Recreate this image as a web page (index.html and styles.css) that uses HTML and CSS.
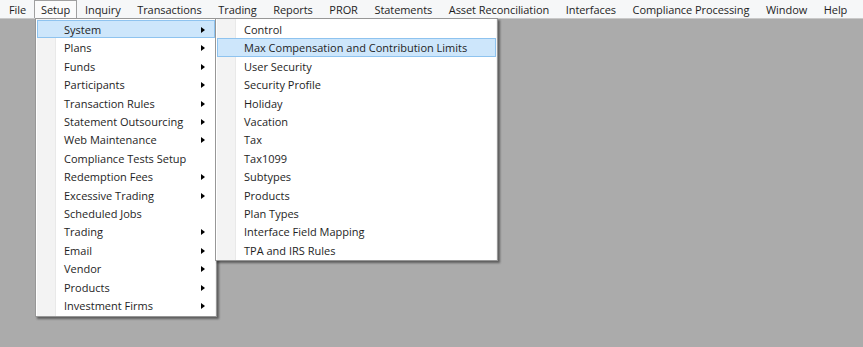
FILE: index.html
```html
<!DOCTYPE html>
<html lang="en">
<head>
  <meta charset="UTF-8">
  <title>Setup Menu</title>
  <link rel="stylesheet" href="styles.css">
</head>
<body>
  <div class="app">
    <div class="menubar">
      <div class="top-item">File</div>
      <div class="top-item open">Setup</div>
      <div class="top-item">Inquiry</div>
      <div class="top-item">Transactions</div>
      <div class="top-item">Trading</div>
      <div class="top-item">Reports</div>
      <div class="top-item">PROR</div>
      <div class="top-item">Statements</div>
      <div class="top-item">Asset Reconciliation</div>
      <div class="top-item">Interfaces</div>
      <div class="top-item">Compliance Processing</div>
      <div class="top-item">Window</div>
      <div class="top-item">Help</div>
    </div>

    <div class="workspace">
      <ul class="menu setup-menu">
        <li class="hover sub">System</li>
        <li class="sub">Plans</li>
        <li class="sub">Funds</li>
        <li class="sub">Participants</li>
        <li class="sub">Transaction Rules</li>
        <li class="sub">Statement Outsourcing</li>
        <li class="sub">Web Maintenance</li>
        <li>Compliance Tests Setup</li>
        <li class="sub">Redemption Fees</li>
        <li class="sub">Excessive Trading</li>
        <li>Scheduled Jobs</li>
        <li class="sub">Trading</li>
        <li class="sub">Email</li>
        <li class="sub">Vendor</li>
        <li class="sub">Products</li>
        <li class="sub">Investment Firms</li>
      </ul>

      <ul class="menu system-menu">
        <li>Control</li>
        <li class="hover">Max Compensation and Contribution Limits</li>
        <li>User Security</li>
        <li>Security Profile</li>
        <li>Holiday</li>
        <li>Vacation</li>
        <li>Tax</li>
        <li>Tax1099</li>
        <li>Subtypes</li>
        <li>Products</li>
        <li>Plan Types</li>
        <li>Interface Field Mapping</li>
        <li>TPA and IRS Rules</li>
      </ul>
    </div>
  </div>
</body>
</html>
```

FILE: styles.css
```css
body {
  margin: 0;
  font-family: "Open Sans", "Noto Sans", sans-serif;
  font-size: 11px;
  color: #1e1e1e;
  background-color: #ababab;
}
.app {
  width: 863px;
  height: 347px;
  overflow: hidden;
}
.menubar {
  display: flex;
  height: 19px;
  background-color: #f6f7f8;
  border-bottom: 1px solid #c9c9c9;
  box-sizing: border-box;
  letter-spacing: -0.07px;
}
.top-item {
  padding: 0 7.8px;
  line-height: 18px;
  white-space: nowrap;
  box-sizing: border-box;
  border: 1px solid transparent;
  margin-left: -1px;
}
.top-item:first-child {
  margin-left: 0;
  padding-left: 8px;
}
.top-item.open {
  background-color: #fbfbfb;
  border-color: #a0a0a0;
  border-bottom-color: transparent;
  padding: 0 6px;
  height: 19px;
}
.workspace {
  position: relative;
  height: 328px;
}
.menu {
  position: absolute;
  margin: 0;
  padding: 1px;
  list-style: none;
  border: 1px solid #979797;
  background: linear-gradient(to right, #f3f3f3 0, #f3f3f3 18px, #e9e9e9 18px, #e9e9e9 19px, #ffffff 19px);
  background-origin: content-box;
  background-clip: padding-box;
  box-shadow: 2px 2px 2px rgba(0, 0, 0, 0.45);
}
.setup-menu {
  left: 35px;
  top: -1px;
  width: 178px;
}
.system-menu {
  left: 215px;
  top: -1px;
  width: 279px;
  z-index: 2;
}
.menu li {
  position: relative;
  height: 18.42px;
  line-height: 18px;
  padding-left: 26px;
  white-space: nowrap;
  box-sizing: border-box;
  border: 1px solid transparent;
}
.menu li.hover {
  background-color: #cde6fb;
  border-color: #8ec3ef;
}
.menu li.sub::after {
  content: "";
  position: absolute;
  right: 9px;
  top: 6px;
  border-left: 4px solid #000;
  border-top: 3px solid transparent;
  border-bottom: 3px solid transparent;
}
```
